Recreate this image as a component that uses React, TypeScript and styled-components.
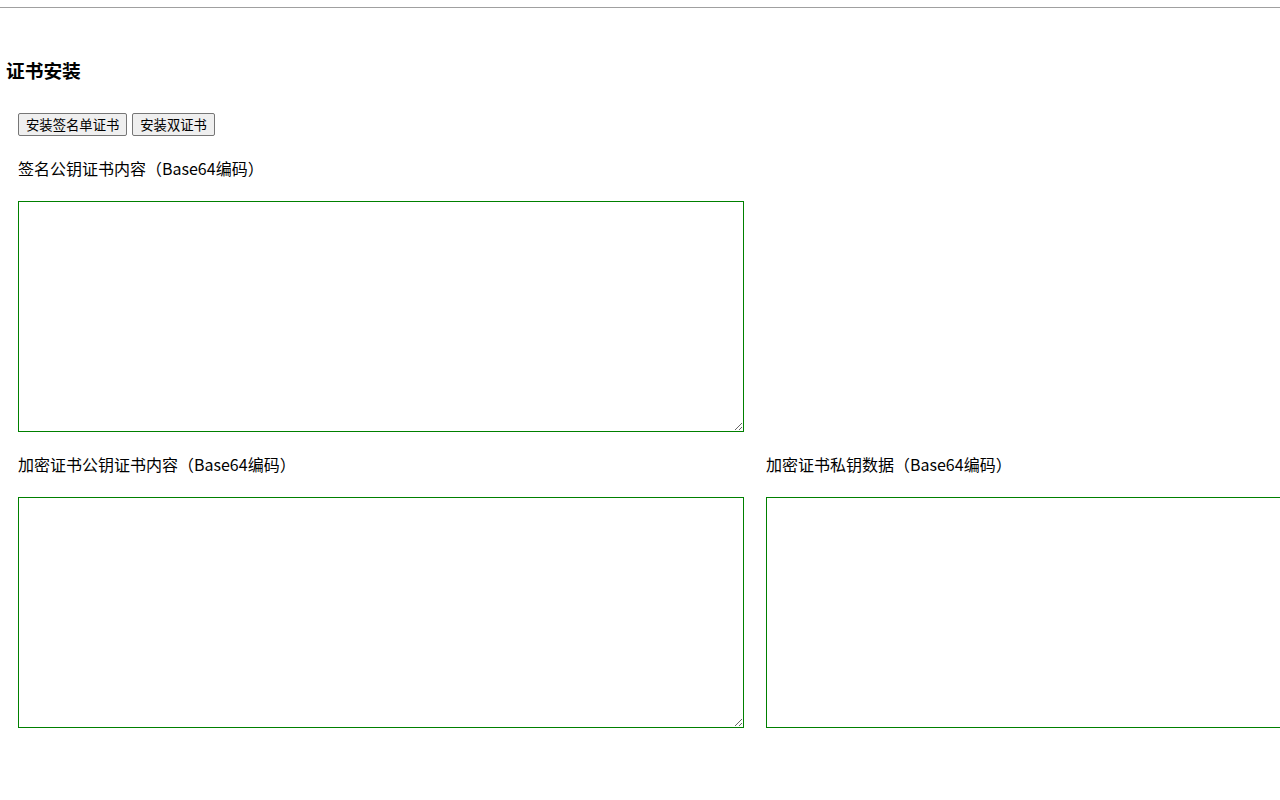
import React from 'react';
import styled, { createGlobalStyle } from 'styled-components';

const GlobalStyle = createGlobalStyle`
  html, body {
    margin: 0;
    padding: 0;
    background: #ffffff;
    overflow: hidden;
  }
  body {
    font-family: "Noto Sans CJK SC", "Noto Sans", sans-serif;
    color: #000000;
  }
`;

const Page = styled.div`
  width: 1600px;
  padding: 7px 6px 0 6px;
`;

const Rule = styled.div`
  height: 0;
  border-top: 1px solid #a0a0a0;
  margin: 0 -6px;
`;

const Title = styled.h3`
  margin: 50px 0 0 0;
  font-size: 18.72px;
  line-height: 24px;
  height: 25px;
  font-weight: bold;
`;

const Section = styled.div`
  padding: 0 12px;
`;

const Toolbar = styled.div`
  display: flex;
  gap: 5px;
  margin-top: 30px;
`;

const Button = styled.button`
  font-family: "Noto Sans CJK SC", "Noto Sans", sans-serif;
  font-size: 13.333px;
  line-height: 19px;
  height: 23px;
  padding: 1px 7px;
  border: 1px solid #767676;
  border-radius: 2px;
  background: #efefef;
  color: #000000;
  cursor: pointer;
`;

const Grid = styled.div`
  display: grid;
  grid-template-columns: 726px 726px;
  column-gap: 22px;
  row-gap: 22px;
  margin-top: 22px;
`;

const Field = styled.div`
  display: flex;
  flex-direction: column;
  gap: 21px;
`;

const Label = styled.label`
  font-size: 16px;
  line-height: 20px;
  height: 22px;
`;

const Area = styled.textarea`
  box-sizing: border-box;
  width: 726px;
  height: 231px;
  border: 1px solid #008000;
  border-radius: 0;
  padding: 2px;
  margin: 0;
  outline: none;
  font-family: "Liberation Mono", monospace;
  font-size: 13px;
  resize: both;
`;

const Empty = styled.div``;

const fields = [
  { id: 'sign', label: '签名公钥证书内容（Base64编码）' },
  null,
  { id: 'enc', label: '加密证书公钥证书内容（Base64编码）' },
  { id: 'key', label: '加密证书私钥数据（Base64编码）' },
];

export default function App() {
  return (
    <>
      <GlobalStyle />
      <Page>
        <Rule />
        <Title>证书安装</Title>
        <Section>
          <Toolbar>
            <Button type="button">安装签名单证书</Button>
            <Button type="button">安装双证书</Button>
          </Toolbar>
          <Grid>
            {fields.map((f, i) =>
              f ? (
                <Field key={f.id}>
                  <Label htmlFor={f.id}>{f.label}</Label>
                  <Area id={f.id} />
                </Field>
              ) : (
                <Empty key={`empty-${i}`} />
              )
            )}
          </Grid>
        </Section>
      </Page>
    </>
  );
}
